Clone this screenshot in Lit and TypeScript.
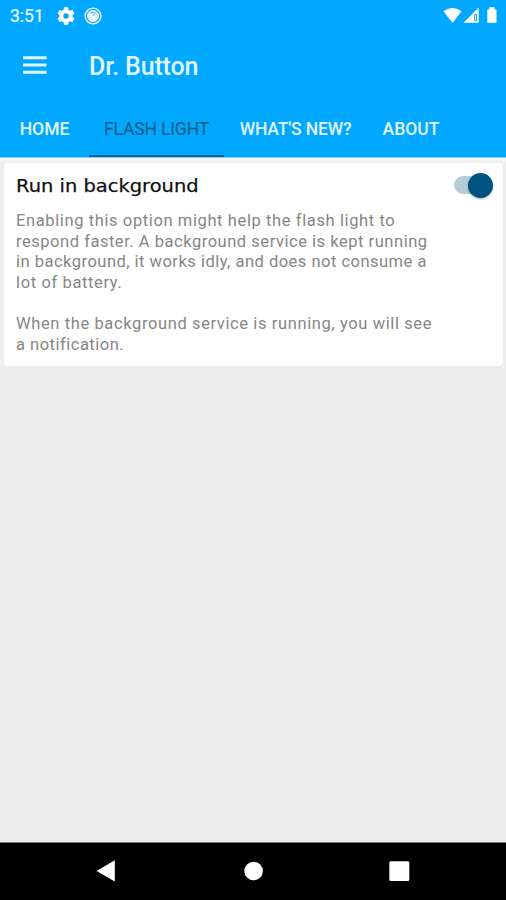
import { LitElement, html, css } from "lit";
import { customElement, property, state } from "lit/decorators.js";
import { classMap } from "lit/directives/class-map.js";

@customElement("status-bar")
class StatusBar extends LitElement {
  static styles = css`
    :host { display: flex; align-items: center; height: 32px; padding: 0 7px 0 10px; box-sizing: border-box; color: #e9f7ff; }
    .time { font: 400 17.5px/32px Roboto, sans-serif; width: 47px; -webkit-text-stroke: 0.2px #e9f7ff; }
    .gear { width: 18px; height: 18px; }
    .badge { width: 18px; height: 18px; margin-left: 9px; }
    .spacer { flex: 1; }
    .system { width: 56px; height: 20px; }
    svg { display: block; }
  `;
  render() {
    return html`
      <span class="time">3:51</span>
      <svg class="gear" viewBox="2 2 20 20" fill="#fff"><path d="M19.14 12.94c.04-.3.06-.61.06-.94s-.02-.64-.07-.94l2.03-1.58a.5.5 0 0 0 .12-.61l-1.92-3.32a.49.49 0 0 0-.59-.22l-2.39.96a7 7 0 0 0-1.62-.94l-.36-2.54a.48.48 0 0 0-.48-.41h-3.84a.47.47 0 0 0-.47.41l-.36 2.54c-.59.24-1.13.57-1.62.94l-2.39-.96a.48.48 0 0 0-.59.22L2.74 8.87a.47.47 0 0 0 .12.61l2.03 1.58a6 6 0 0 0 0 1.88l-2.03 1.58a.5.5 0 0 0-.12.61l1.92 3.32c.12.22.37.29.59.22l2.39-.96c.5.38 1.03.7 1.62.94l.36 2.54c.05.24.24.41.48.41h3.84c.24 0 .44-.17.47-.41l.36-2.54a7 7 0 0 0 1.62-.94l2.39.96c.22.08.47 0 .59-.22l1.92-3.32a.47.47 0 0 0-.12-.61zM12 15a3 3 0 1 1 0-6 3 3 0 0 1 0 6z"/></svg>
      <svg class="badge" viewBox="0 0 18 18" fill="none" stroke="#f2faff">
        <circle cx="9" cy="9" r="7.900" stroke-width="1.400"/>
        <circle cx="9" cy="9" r="5.500" fill="#e6f6ff" stroke-width="1"/>
        <path d="M6.200 6.200a4.500 4.500 0 0 1 5.600 0M9 9l1.700-1.700" stroke="#2bb0ff" stroke-width="1"/>
      </svg>
      <span class="spacer"></span>
      <svg class="system" viewBox="0 0 56 20" fill="#fff">
        <path d="M0.500 5Q9.500-1.500 18.500 5L9.500 16.800Z" transform="translate(0 .3)"/>
        <path d="M20.500 16.700L35.700 1.400V16.700Z"/>
        <path d="M31.700 8.500h1.800v6.200h-1.800z" fill="none" stroke="#1aa6f5" stroke-width="1"/>
        <path d="M44.600 3.800h2V1.600h4.600v2.200h2v12.700h-8.600z" stroke="#fff" stroke-width=".6" stroke-linejoin="round"/>
      </svg>`;
  }
}

@customElement("tab-strip")
class TabStrip extends LitElement {
  @property({ type: Array }) tabs: { label: string; name: string }[] = [];
  @property() active = "";
  static styles = css`
    :host { display: flex; height: 57px; padding-left: 5px; box-sizing: border-box; border-bottom: 1px solid #7fcefa; }
    .tab { box-sizing: border-box; height: 56px; flex: none; display: flex; justify-content: center; border-bottom: 2px solid transparent; font: 500 17.5px/56px Roboto, sans-serif; color: #e0f4ff; white-space: nowrap; }
    .home { width: 79px; margin-right: 5px; }
    .flash { width: 135px; letter-spacing: -0.15px; }
    .news { width: 143px; letter-spacing: -0.15px; }
    .about { width: 88px; }
    .active { color: #07608f; border-color: #056292; font-weight: 400; -webkit-text-stroke: 0.2px #07608f; }
  `;
  render() {
    return this.tabs.map(
      (t) => html`<div class=${classMap({ tab: true, [t.name]: true, active: t.name === this.active })}>${t.label}</div>`
    );
  }
}

@customElement("toggle-switch")
class ToggleSwitch extends LitElement {
  static styles = css`
    :host { display: flex; align-items: center; width: 39px; height: 26px; }
    .track { width: 34px; height: 18px; border-radius: 9px; background: #b3ced9; flex: none; margin-right: -20px; }
    .thumb { width: 25px; height: 25px; border-radius: 50%; background: #005380; flex: none; box-shadow: 0 1px 2px rgba(0, 0, 0, 0.35); }
  `;
  render() {
    return html`<span class="track"></span><span class="thumb"></span>`;
  }
}

@customElement("app-root")
class AppRoot extends LitElement {
  @state() private tab = "flash";
  private tabs = [
    { label: "HOME", name: "home" },
    { label: "FLASH LIGHT", name: "flash" },
    { label: "WHAT'S NEW?", name: "news" },
    { label: "ABOUT", name: "about" },
  ];
  private lines = [
    { text: "Enabling this option might help the flash light to", gap: 0.61 },
    { text: "respond faster. A background service is kept running", gap: 0.53 },
    { text: "in background, it works idly, and does not consume a", gap: 0.49 },
    { text: "lot of battery.", gap: 0.63 },
    { text: "", gap: 0 },
    { text: "When the background service is running, you will see", gap: 0.61 },
    { text: "a notification.", gap: 0.5 },
  ];
  static styles = css`
    :host { display: flex; flex-direction: column; width: 506px; height: 900px; background: #eeeeee; overflow: hidden; }
    .top { background: #00a9ff; flex: none; }
    .bar { height: 69px; display: flex; align-items: center; padding-left: 23px; }
    .menu { width: 24px; height: 18px; display: block; margin-top: -3px; }
    h1 { margin: -1px 0 0 42px; font: 500 25px/69px Roboto, sans-serif; color: #e2f5ff; letter-spacing: -0.15px; }
    .content { flex: 1; padding: 5px 3px 0 4px; background: linear-gradient(#f8f8f8, #eeeeee 5px); }
    .card { height: 203px; box-sizing: border-box; background: #fff; border-radius: 3px; padding: 9px 10px 0 12px; display: flex; justify-content: space-between; }
    .title { font: 400 17px/28px "DejaVu Sans", sans-serif; color: #111; transform: scaleX(1.145); transform-origin: 0 50%; white-space: nowrap; width: max-content; -webkit-text-stroke: 0.25px #111; }
    .desc { margin-top: 11px; }
    .line { height: 20.7px; font: 400 16.5px/20.7px Roboto, sans-serif; color: #868686; white-space: pre; width: max-content; }
    .nav { height: 58px; flex: none; background: #000; border-top: 1px solid #777; box-sizing: border-box; }
    .nav svg { display: block; }
  `;
  render() {
    return html`
      <div class="top">
        <status-bar></status-bar>
        <div class="bar">
          <svg class="menu" viewBox="0 0 24 18"><path d="M0 1.700h23.500M0 9h23.500M0 16.300h23.500" stroke="#e2f5ff" stroke-width="2.900"/></svg>
          <h1>Dr. Button</h1>
        </div>
        <tab-strip .tabs=${this.tabs} .active=${this.tab}></tab-strip>
      </div>
      <div class="content">
        <div class="card">
          <div>
            <div class="title">Run in background</div>
            <div class="desc">
              ${this.lines.map((l) => html`<div class="line" style="letter-spacing:${l.gap}px">${l.text}</div>`)}
            </div>
          </div>
          <toggle-switch></toggle-switch>
        </div>
      </div>
      <div class="nav">
        <svg width="506" height="57" viewBox="0 843 506 57" fill="#fff">
          <path d="M96.500 871L114.800 860.300V881.500Z"/>
          <circle cx="253.600" cy="871" r="9.300"/>
          <rect x="389.300" y="861.300" width="20" height="19.700" rx="1.500"/>
        </svg>
      </div>`;
  }
}
